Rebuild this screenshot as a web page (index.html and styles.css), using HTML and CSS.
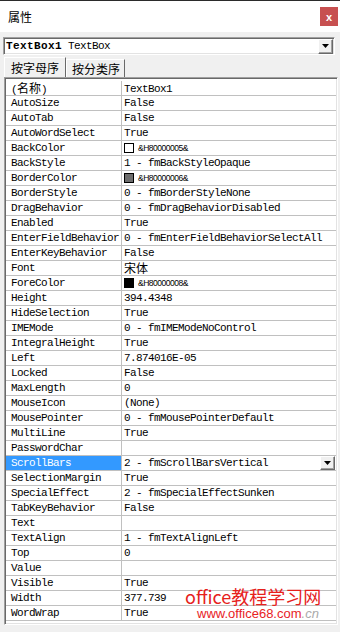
FILE: index.html
```html
<!DOCTYPE html>
<html lang="zh-CN">
<head>
    <meta charset="UTF-8">
    <title>属性</title>
    <link rel="stylesheet" href="styles.css">
</head>
<body>
    <div class="window">
        <div class="titlebar">
            <span class="title">属性</span>
            <span class="close">x</span>
        </div>

        <div class="combo">
            <b class="obj">TextBox1</b>&nbsp;TextBox
            <span class="ddbtn"><svg width="7" height="4" viewBox="0 0 7 4"><path d="M0 0h7L3.5 4z"/></svg></span>
        </div>

        <div class="tabs">
            <span class="tab active">按字母序</span>
            <span class="tab">按分类序</span>
        </div>

        <div class="frame">
            <div class="row"><span class="name">(<span class="cjk">名称</span>)</span><span class="val">TextBox1</span></div>
            <div class="row"><span class="name">AutoSize</span><span class="val">False</span></div>
            <div class="row"><span class="name">AutoTab</span><span class="val">False</span></div>
            <div class="row"><span class="name">AutoWordSelect</span><span class="val">True</span></div>
            <div class="row"><span class="name">BackColor</span><span class="val"><i class="swatch white"></i><span class="hex">&amp;H80000005&amp;</span></span></div>
            <div class="row"><span class="name">BackStyle</span><span class="val">1 - fmBackStyleOpaque</span></div>
            <div class="row"><span class="name">BorderColor</span><span class="val"><i class="swatch gray"></i><span class="hex">&amp;H80000006&amp;</span></span></div>
            <div class="row"><span class="name">BorderStyle</span><span class="val">0 - fmBorderStyleNone</span></div>
            <div class="row"><span class="name">DragBehavior</span><span class="val">0 - fmDragBehaviorDisabled</span></div>
            <div class="row"><span class="name">Enabled</span><span class="val">True</span></div>
            <div class="row"><span class="name">EnterFieldBehavior</span><span class="val">0 - fmEnterFieldBehaviorSelectAll</span></div>
            <div class="row"><span class="name">EnterKeyBehavior</span><span class="val">False</span></div>
            <div class="row"><span class="name">Font</span><span class="val"><span class="cjk">宋体</span></span></div>
            <div class="row"><span class="name">ForeColor</span><span class="val"><i class="swatch black"></i><span class="hex">&amp;H80000008&amp;</span></span></div>
            <div class="row"><span class="name">Height</span><span class="val">394.4348</span></div>
            <div class="row"><span class="name">HideSelection</span><span class="val">True</span></div>
            <div class="row"><span class="name">IMEMode</span><span class="val">0 - fmIMEModeNoControl</span></div>
            <div class="row"><span class="name">IntegralHeight</span><span class="val">True</span></div>
            <div class="row"><span class="name">Left</span><span class="val">7.874016E-05</span></div>
            <div class="row"><span class="name">Locked</span><span class="val">False</span></div>
            <div class="row"><span class="name">MaxLength</span><span class="val">0</span></div>
            <div class="row"><span class="name">MouseIcon</span><span class="val">(None)</span></div>
            <div class="row"><span class="name">MousePointer</span><span class="val">0 - fmMousePointerDefault</span></div>
            <div class="row"><span class="name">MultiLine</span><span class="val">True</span></div>
            <div class="row"><span class="name">PasswordChar</span><span class="val"></span></div>
            <div class="row"><span class="name selected">ScrollBars</span><span class="val">2 - fmScrollBarsVertical<span class="ddbtn small"><svg width="7" height="4" viewBox="0 0 7 4"><path d="M0 0h7L3.5 4z"/></svg></span></span></div>
            <div class="row"><span class="name">SelectionMargin</span><span class="val">True</span></div>
            <div class="row"><span class="name">SpecialEffect</span><span class="val">2 - fmSpecialEffectSunken</span></div>
            <div class="row"><span class="name">TabKeyBehavior</span><span class="val">False</span></div>
            <div class="row"><span class="name">Text</span><span class="val"></span></div>
            <div class="row"><span class="name">TextAlign</span><span class="val">1 - fmTextAlignLeft</span></div>
            <div class="row"><span class="name">Top</span><span class="val">0</span></div>
            <div class="row"><span class="name">Value</span><span class="val"></span></div>
            <div class="row"><span class="name">Visible</span><span class="val">True</span></div>
            <div class="row"><span class="name">Width</span><span class="val">377.739</span></div>
            <div class="row"><span class="name">WordWrap</span><span class="val">True</span></div>
        </div>

        <!-- watermark over the grid -->
        <div class="wm-title">office教程学习网</div>
        <div class="wm-url">www.office68.com<span class="wm-cn">.cn</span></div>
    </div>
</body>
</html>
```

FILE: styles.css
```css
* {
    margin: 0;
    padding: 0;
    box-sizing: border-box;
}

body {
    width: 340px;
    height: 632px;
    overflow: hidden;
    background: #f0f0f0;
    color: #000;
    font-family: 'Liberation Mono', 'Noto Sans CJK SC', monospace;
}

.window {
    position: relative;
    height: 632px;
    border-top: 1px solid #2b2b2b;
    display: flex;
    flex-direction: column;
}

.titlebar {
    height: 31px;
    background: #fff;
    display: flex;
    align-items: center;
    justify-content: space-between;
    padding: 0 2px 0 8px;
}

.title {
    font-family: 'Noto Sans CJK SC', sans-serif;
    font-size: 12px;
}

.close {
    width: 18px;
    height: 19px;
    background: #c75050;
    color: #fff;
    font: bold 11px 'Liberation Sans', sans-serif;
    display: flex;
    align-items: center;
    justify-content: center;
}

.combo {
    margin: 5px 5px 0 3px;
    height: 18px;
    background: #fff;
    border: 1px solid;
    border-color: #a0a0a0 #fff #fff #a0a0a0;
    box-shadow: inset 1px 1px #696969, inset -1px -1px #e3e3e3;
    display: flex;
    align-items: center;
    padding: 0 1px 0 2px;
    font-size: 11px;
    letter-spacing: -0.6px;
    white-space: nowrap;
}

.obj {
    letter-spacing: 0.4px;
}

.ddbtn {
    margin-left: auto;
    width: 15px;
    height: 15px;
    background: #f0f0f0;
    border: 1px solid;
    border-color: #fff #696969 #696969 #fff;
    box-shadow: inset -1px -1px #a0a0a0;
    display: flex;
    align-items: center;
    justify-content: center;
}

.ddbtn.small {
    height: 14px;
    margin-right: 1px;
}

.tabs {
    display: flex;
    align-items: flex-end;
    height: 20px;
    margin: 2px 0 0 4px;
}

.tab {
    height: 18px;
    line-height: 17px;
    padding: 0 4px 0 5px;
    font-family: 'Noto Sans CJK SC', sans-serif;
    font-size: 12px;
    border: 1px solid;
    border-color: #fff #696969 transparent #fff;
    border-bottom: none;
}

.tab.active {
    height: 20px;
    line-height: 19px;
    padding: 0 6px;
}

.frame {
    width: 334px;
    height: 548px;
    margin-left: 4px;
    background: #fff;
    border: 1px solid;
    border-color: #a0a0a0 #fff #fff #a0a0a0;
    box-shadow: inset 1px 1px #696969, inset -1px -1px #e3e3e3;
    padding: 3px 1px;
}

.row {
    display: grid;
    grid-template-columns: 116px 1fr;
    height: 15px;
    border-bottom: 1px solid #c0c0c0;
    font-size: 11px;
    line-height: 14px;
    letter-spacing: -0.6px;
    white-space: nowrap;
}

.name {
    border-right: 1px solid #c0c0c0;
    padding-left: 5px;
}

.name.selected {
    background: #3399ff;
    color: #fff;
}

.val {
    padding-left: 2px;
    display: flex;
    align-items: center;
}

.cjk {
    font-family: 'Noto Sans CJK SC', sans-serif;
    font-size: 12px;
    line-height: 14px;
    letter-spacing: 0;
}

.swatch {
    width: 10px;
    height: 10px;
    border: 1px solid #000;
    margin-right: 4px;
}

.swatch.white { background: #fff; }
.swatch.gray { background: #6d6d6d; }
.swatch.black { background: #000; }

.hex {
    font: 8.5px 'Liberation Sans', sans-serif;
    letter-spacing: -0.5px;
}

.wm-title {
    position: absolute;
    left: 185px;
    top: 586px;
    font-family: 'Noto Sans CJK SC', sans-serif;
    font-size: 18px;
    line-height: 18px;
    color: #e6211c;
    white-space: nowrap;
}

.wm-url {
    position: absolute;
    left: 197px;
    top: 606px;
    font: 13px 'Liberation Sans', sans-serif;
    line-height: 14px;
    color: #e8231f;
    white-space: nowrap;
    text-shadow: 0 0 2px #fff;
}

.wm-cn {
    color: #aaa;
    font-style: italic;
}
```
